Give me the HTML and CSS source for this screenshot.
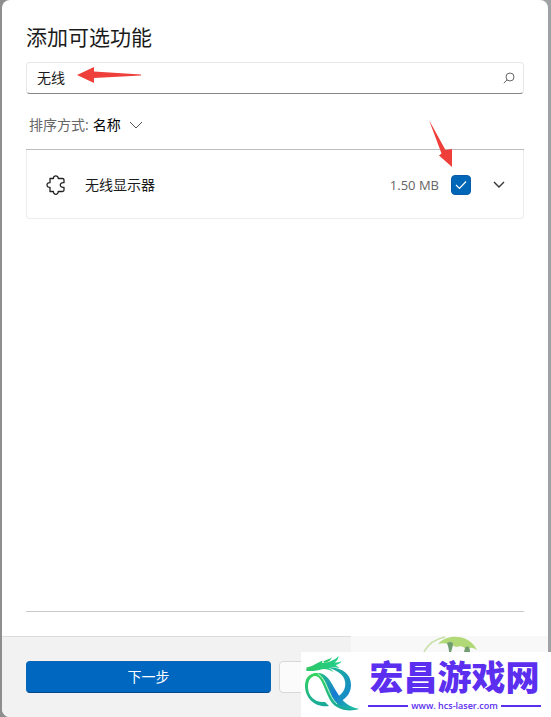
FILE: index.html
```html
<!DOCTYPE html>
<html lang="zh-CN">
<head>
  <meta charset="UTF-8">
  <meta name="viewport" content="width=device-width, initial-scale=1">
  <title>添加可选功能</title>
  <link rel="stylesheet" href="styles.css">
</head>
<body>
  <div class="dialog">
    <div class="content">
      <h1 class="title">添加可选功能</h1>

      <div class="search">
        <input class="search-input" type="text" value="无线" aria-label="搜索">
        <svg class="search-icon" viewBox="0 0 12 12" fill="none" stroke="#666">
          <circle cx="7" cy="5" r="4" />
          <path d="M4.2 7.8L.8 11.2" />
        </svg>
      </div>

      <div class="sort">
        <label class="sort-label" for="sortBy">排序方式:</label>
        <select class="sort-select" id="sortBy">
          <option>名称</option>
        </select>
        <svg class="sort-chevron" viewBox="0 0 14 8" fill="none" stroke="#555">
          <path d="M1 1l6 6 6-6" />
        </svg>
      </div>

      <div class="list">
        <div class="item">
          <svg class="item-icon" viewBox="0 0 20 20" fill="none" stroke="#222" stroke-width="1.3" stroke-linejoin="round">
            <path d="M4 3.500h3.400c-.2-3.600 5-3.600 4.800 0h4.300q1.500 0 1.500 1.500v2.700c-5-.8-5 5.400 0 4.600V15q0 1.500-1.500 1.500h-4.300c.2 3.700-5 3.700-4.800 0H4v-4.200c-4 .2-4-4.800 0-4.600z" />
          </svg>
          <label class="item-name" for="wirelessDisplay">无线显示器</label>
          <span class="item-size">1.50 MB</span>
          <span class="check">
            <input class="check-input" type="checkbox" id="wirelessDisplay" checked>
            <svg class="check-mark" viewBox="0 0 12 10" fill="none" stroke="#fff" stroke-width="1.2">
              <path d="M1 5l3.5 3.5L11 1.500" />
            </svg>
          </span>
          <button class="expand" aria-label="展开">
            <svg class="expand-icon" viewBox="0 0 12 8" fill="none" stroke="#333" stroke-width="1.4">
              <path d="M1 1l5 5 5-5" />
            </svg>
          </button>
        </div>
      </div>
    </div>

    <div class="footer">
      <button class="btn btn-primary">下一步</button>
      <button class="btn" aria-label="取消"></button>
    </div>
  </div>

  <!-- pointers to the search box and the tick box -->
  <svg class="arrow arrow-search" viewBox="0 0 66 18" fill="#ee3f3b">
    <path d="M1 9L18 1v4.500L65 8.500v1L18 12v5z" />
  </svg>
  <svg class="arrow arrow-check" viewBox="0 0 26 50" fill="#ee3f3b">
    <path d="M1 1l16.500 30L24 30v18L11 36.500l2.500-2z" />
  </svg>

  <div class="haze">
    <svg class="doodle" viewBox="0 0 56 16" fill="none">
      <path d="M1 16C5 8 12 3 22 1" stroke="#c5dfa5" stroke-width="1.500" />
      <path d="M15 8C22 0 34-1 43 3c6 3 9 7 11 11-5-3-8-3-10 0-5-5-7-4-11-3-6-3-12-5-18-3z" fill="#b2d977" />
      <path d="M24 7q3-2 6 0c0 3-1 6-2 9h-2c0-3-1-6-2-9zM42 12c3-3 5-1 5 4h-6z" fill="#6f9d70" />
    </svg>
  </div>

  <div class="watermark">
    <svg class="logo" viewBox="0 0 56 60">
      <defs>
        <linearGradient id="head" x1="0" y1="0" x2="1" y2="0">
          <stop offset="0" stop-color="#2fc765" />
          <stop offset="1" stop-color="#1fcf8c" />
        </linearGradient>
        <linearGradient id="ringRight" x1="0" y1="0" x2="1" y2="1">
          <stop offset="0" stop-color="#1fb892" />
          <stop offset="1" stop-color="#1583d2" />
        </linearGradient>
        <linearGradient id="ringLeft" x1="0" y1="0" x2="0" y2="1">
          <stop offset="0" stop-color="#35d65d" />
          <stop offset="1" stop-color="#18a89c" />
        </linearGradient>
        <linearGradient id="tail" x1="0" y1="0" x2="1" y2="1">
          <stop offset="0" stop-color="#24c484" />
          <stop offset=".5" stop-color="#1579d6" />
          <stop offset="1" stop-color="#20c898" />
        </linearGradient>
      </defs>
      <path d="M2.500 12.500c4-1 7-2 10-4l6-3-.5 2.500c4 0 8-1 11-3 3-1 4-2.500 5.500-4 0 3-1.500 5-4 6.500 3 0 5-.5 7-1.500-1 2-3 3.500-6 4l4 3c-4-1-7-1-11 0 2 1 4 2 5 4-5-3-10-4-14-2-4 1-8 1-12 1-1 0-2-1-1-2z" fill="url(#head)" />
      <path d="M19 7c3-3 6-2 9-5-1 3-3 5-7 6z" fill="#2ccb70" />
      <path d="M24 12.500c13-1 23 6 23 17 0 7-3 12-9 16l-4-4c6-4 8-9 7-15-1-7-8-11-17-14z" fill="url(#ringRight)" />
      <path d="M12 18C4 19 1 24 1 31c0 12 10 22 24 20l-4-4C11 48 4 41 4 32c0-6 2-10 8-12z" fill="url(#ringLeft)" />
      <path d="M3 26c2-6 6-8 10-8 5 0 8 4 11 10 7 14 12 24 31 26-10 3-20 1-26-5C21 40 19 21 11 21c-4 0-6 2-8 5z" fill="url(#ringLeft)" />
      <path d="M14 18c6 0 10 4 14 11 7 12 12 22 27 25-9 1-17-1-22-6-8-8-9-24-19-30z" fill="url(#tail)" />
      <path d="M14 19c9 5 10 22 19 30" fill="none" stroke="#e4fff8" stroke-width=".8" />
    </svg>
    <div class="brand">
      <div class="brand-name">宏昌游戏网</div>
      <div class="brand-url">www. hcs-laser.com</div>
    </div>
  </div>
</body>
</html>
```

FILE: styles.css
```css
* {
  box-sizing: border-box;
}

body {
  margin: 0;
  padding: 0 3px 0 2px;
  position: relative;
  background: linear-gradient(90deg, #8e8e8e, #9fa2a4);
  font-family: "Open Sans", "Noto Sans CJK SC", sans-serif;
  font-size: 14px;
  line-height: 20px;
  color: #1b1b1b;
}

.dialog {
  display: flex;
  flex-direction: column;
  min-height: 100vh;
  background: #fff;
  border-radius: 8px;
  overflow: hidden;
}

.content {
  flex: 1;
  display: flex;
  flex-direction: column;
  padding: 24px;
}

.title {
  margin: 0 0 12px;
  font-size: 21px;
  line-height: 26px;
  font-weight: 400;
}

.search {
  display: flex;
  align-items: center;
  height: 32px;
  padding: 0 8px 0 10px;
  border: 1px solid #e8e8e8;
  border-bottom-color: #858585;
  border-radius: 4px;
}

.search-input {
  flex: 1;
  min-width: 0;
  height: 28px;
  padding: 0 0 2px;
  border: none;
  outline: none;
  background: none;
  font: inherit;
  color: inherit;
}

.search-icon {
  width: 12px;
  height: 12px;
}

.sort {
  display: flex;
  align-items: center;
  gap: 4px;
  height: 55px;
  padding: 6px 3px 0;
}

.sort-label {
  color: #666;
}

.sort-select {
  appearance: none;
  padding: 0;
  border: none;
  background: none;
  font: inherit;
  color: #000;
}

.sort-chevron {
  width: 14px;
  height: 8px;
  margin-left: 4px;
}

.list {
  flex: 1;
  border-top: 1px solid #bdbdbd;
  border-bottom: 1px solid #c8c8c8;
}

.item {
  display: flex;
  align-items: center;
  height: 69px;
  padding: 2px 16px 0 19px;
  border: 1px solid #ececec;
  border-top: none;
  border-radius: 0 0 4px 4px;
}

.item-icon {
  width: 20px;
  height: 20px;
}

.item-name {
  flex: 1;
  padding-left: 19px;
}

.item-size {
  font-size: 13px;
  color: #666;
}

.check {
  position: relative;
  display: flex;
  margin: 0 20px 0 12px;
}

.check-input {
  appearance: none;
  width: 20px;
  height: 20px;
  margin: 0;
  border: 1px solid #0a5ca8;
  border-radius: 4px;
  background: #0067b8;
}

.check-mark {
  position: absolute;
  top: 5px;
  left: 4px;
  width: 12px;
  height: 10px;
  pointer-events: none;
}

.expand {
  display: flex;
  padding: 2px;
  border: none;
  background: none;
}

.expand-icon {
  width: 12px;
  height: 8px;
}

.footer {
  display: grid;
  grid-template-columns: 1fr 1fr;
  gap: 8px;
  padding: 24px;
  border-top: 1px solid #dcdcdc;
  background: #f2f2f2;
}

.btn {
  height: 32px;
  padding: 0;
  border: 1px solid #d8d8d8;
  border-radius: 4px;
  background: #fbfbfb;
  font: inherit;
}

.btn-primary {
  border-color: #0a66b4;
  border-bottom-color: #004a88;
  background: #0067c0;
  color: #fff;
}

.arrow {
  position: absolute;
}

.arrow-search {
  top: 66px;
  left: 76px;
  width: 66px;
  height: 18px;
}

.arrow-check {
  top: 119px;
  right: 97px;
  width: 26px;
  height: 50px;
}

.haze {
  position: absolute;
  right: 3px;
  bottom: 65px;
  width: 197px;
  height: 16px;
  background: #f8f8f8;
}

.doodle {
  position: absolute;
  right: 69px;
  bottom: 0;
  width: 56px;
  height: 16px;
}

.watermark {
  position: absolute;
  right: 0;
  bottom: 0;
  display: flex;
  align-items: center;
  gap: 8px;
  width: 250px;
  height: 65px;
  padding: 0 10px 0 3px;
  background: #fff;
}

.logo {
  flex: none;
  width: 56px;
  height: 60px;
}

.brand {
  flex: 1;
  color: #5c2eef;
  text-align: center;
}

.brand-name {
  font-family: "Noto Sans CJK SC", sans-serif;
  font-size: 34px;
  line-height: 36px;
  margin-bottom: 6px;
  font-weight: 900;
  white-space: nowrap;
}

.brand-url {
  display: flex;
  align-items: center;
  gap: 3px;
  font-family: "Open Sans", sans-serif;
  font-size: 9px;
  line-height: 12px;
  font-weight: 600;
  white-space: nowrap;
}

.brand-url::before,
.brand-url::after {
  content: "";
  flex: 1;
  height: 2px;
  background: #5c2eef;
}
```
